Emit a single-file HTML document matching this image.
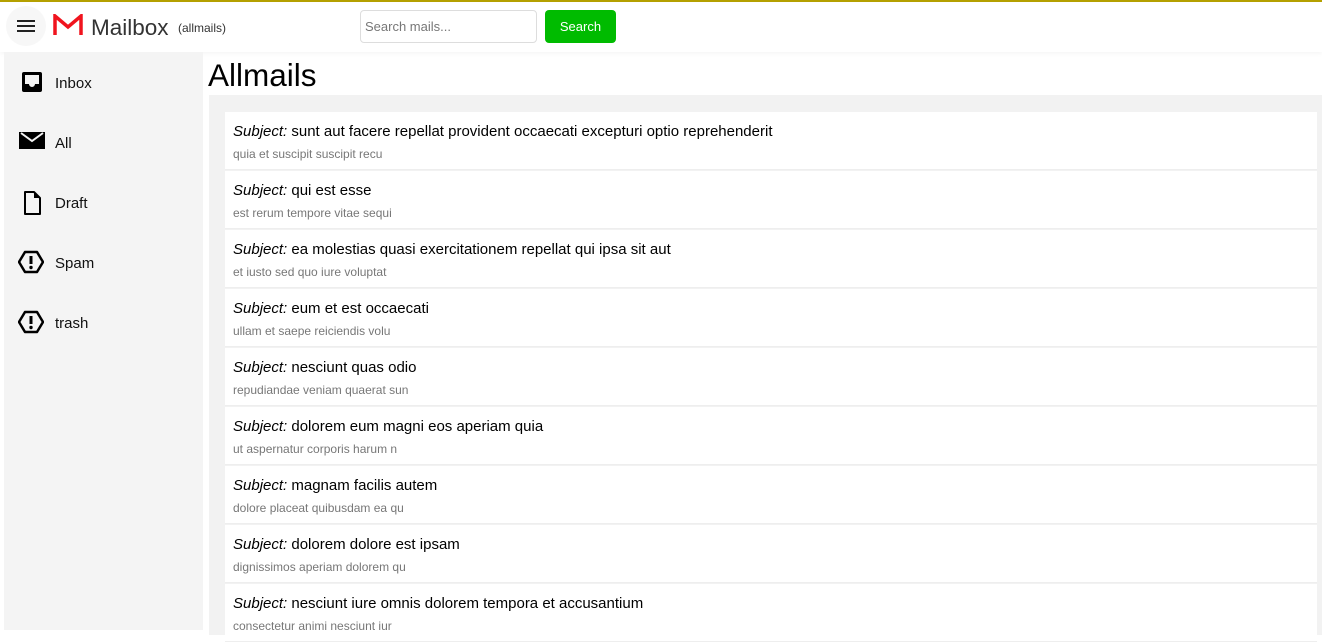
<!DOCTYPE html>
<html><head><meta charset="utf-8"><style>
*{box-sizing:border-box;margin:0;padding:0}
body{width:1322px;height:630px;overflow:hidden;background:#fff;font-family:"Liberation Sans",sans-serif;color:#000;position:relative}
.top{position:absolute;left:0;top:0;width:1322px;height:2px;background:#b5a000}
.hdr{position:absolute;left:0;top:2px;width:1322px;height:50px;background:#fff;box-shadow:0 2px 4px rgba(0,0,0,.04)}
.burger{position:absolute;left:6px;top:4px;width:40px;height:40px;border-radius:50%;background:#f7f7f7}
.burger i{position:absolute;left:11px;width:18px;height:2px;background:#222}
.logo{position:absolute;left:53px;top:12px}
.brand{position:absolute;left:91px;top:13px;font-size:22.5px;color:#333}
.sub{position:absolute;left:178px;top:19px;font-size:12px;color:#333}
.search{position:absolute;left:360px;top:8px;width:177px;height:33px;border:1px solid #ddd;border-radius:4px;font-size:13px;color:#777;padding:8px 4px}
.btn{position:absolute;left:545px;top:8px;width:71px;height:33px;background:#00bb00;border-radius:4px;color:#fff;font-size:13px;text-align:center;line-height:33px}
.side{position:absolute;left:4px;top:52px;width:199px;height:578px;background:#f4f4f4}
.nav{position:absolute;left:16px;font-size:15px;color:#111}
.nav svg{position:absolute;left:0;top:0}
.nav span{position:absolute;left:35px;top:5px;white-space:nowrap}
h1{position:absolute;left:208px;top:57px;font-size:31.5px;font-weight:normal;color:#000}
.panel{position:absolute;left:209px;top:95px;width:1113px;height:540px;background:#f2f2f2}
.item{position:absolute;left:225px;width:1092px;height:58px;background:#fff;border-bottom:1px solid #eee}
.item .s{position:absolute;left:8px;top:11px;font-size:15px;white-space:nowrap}
.item .p{position:absolute;left:8px;top:35px;font-size:12px;color:#777;white-space:nowrap}
</style></head><body>
<div class="top"></div>
<div class="hdr">
<div class="burger"><i style="top:14px"></i><i style="top:19px"></i><i style="top:24px"></i></div>
<svg class="logo" width="30" height="22" viewBox="0 0 30 22"><path d="M2 21V2l13 11L28 2v19" fill="none" stroke="#f0141e" stroke-width="3.5" stroke-linejoin="miter"/></svg>
<div class="brand">Mailbox</div><div class="sub">(allmails)</div>
<div class="search">Search mails...</div>
<div class="btn">Search</div>
</div>
<div class="side">
<div class="nav" style="top:18px"><svg width="24" height="24" viewBox="0 0 24 24"><rect x="2" y="2" width="20" height="20" rx="2" fill="#000"/><path d="M5 5h14v9h-4a3 3 0 0 1-6 0H5z" fill="#f4f4f4"/></svg><span>Inbox</span></div>
<div class="nav" style="top:78px"><svg width="26" height="22" viewBox="0 0 26 22" style="left:-1px;top:0"><path d="M0 2h26v17H0z" fill="#000"/><path d="M2 3l11 8 11-8" fill="none" stroke="#f4f4f4" stroke-width="2"/></svg><span>All</span></div>
<div class="nav" style="top:138px"><svg width="24" height="26" viewBox="0 0 24 26"><path d="M5 2h9l6 6v16H5z" fill="none" stroke="#000" stroke-width="2" stroke-linejoin="round"/><path d="M14 2v6h6z" fill="#000"/></svg><span>Draft</span></div>
<div class="nav" style="top:198px"><svg width="26" height="24" viewBox="0 0 26 24" style="left:-2px"><path d="M7 2h12l6 10-6 10H7L1 12z" fill="none" stroke="#000" stroke-width="2.5" stroke-linejoin="round"/><path d="M13 6v8" stroke="#000" stroke-width="3"/><circle cx="13" cy="17.5" r="1.7"/></svg><span>Spam</span></div>
<div class="nav" style="top:258px"><svg width="26" height="24" viewBox="0 0 26 24" style="left:-2px"><path d="M7 2h12l6 10-6 10H7L1 12z" fill="none" stroke="#000" stroke-width="2.5" stroke-linejoin="round"/><path d="M13 6v8" stroke="#000" stroke-width="3"/><circle cx="13" cy="17.5" r="1.7"/></svg><span>trash</span></div>
</div>
<h1>Allmails</h1>
<div class="panel"></div>
<div class="item" style="top:112px"><div class="s"><i>Subject:</i> sunt aut facere repellat provident occaecati excepturi optio reprehenderit</div><div class="p">quia et suscipit suscipit recu</div></div>
<div class="item" style="top:171px"><div class="s"><i>Subject:</i> qui est esse</div><div class="p">est rerum tempore vitae sequi</div></div>
<div class="item" style="top:230px"><div class="s"><i>Subject:</i> ea molestias quasi exercitationem repellat qui ipsa sit aut</div><div class="p">et iusto sed quo iure voluptat</div></div>
<div class="item" style="top:289px"><div class="s"><i>Subject:</i> eum et est occaecati</div><div class="p">ullam et saepe reiciendis volu</div></div>
<div class="item" style="top:348px"><div class="s"><i>Subject:</i> nesciunt quas odio</div><div class="p">repudiandae veniam quaerat sun</div></div>
<div class="item" style="top:407px"><div class="s"><i>Subject:</i> dolorem eum magni eos aperiam quia</div><div class="p">ut aspernatur corporis harum n</div></div>
<div class="item" style="top:466px"><div class="s"><i>Subject:</i> magnam facilis autem</div><div class="p">dolore placeat quibusdam ea qu</div></div>
<div class="item" style="top:525px"><div class="s"><i>Subject:</i> dolorem dolore est ipsam</div><div class="p">dignissimos aperiam dolorem qu</div></div>
<div class="item" style="top:584px"><div class="s"><i>Subject:</i> nesciunt iure omnis dolorem tempora et accusantium</div><div class="p">consectetur animi nesciunt iur</div></div>
</body></html>
